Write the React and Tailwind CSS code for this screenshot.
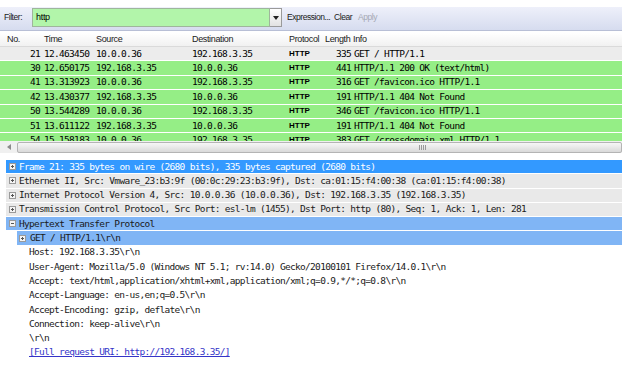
const packets = [
  { no: 21, time: '12.463450', src: '10.0.0.36', dst: '192.168.3.35', len: 335, info: 'GET / HTTP/1.1', sel: true },
  { no: 30, time: '12.650175', src: '192.168.3.35', dst: '10.0.0.36', len: 441, info: 'HTTP/1.1 200 OK  (text/html)' },
  { no: 41, time: '13.313923', src: '10.0.0.36', dst: '192.168.3.35', len: 316, info: 'GET /favicon.ico HTTP/1.1' },
  { no: 42, time: '13.430377', src: '192.168.3.35', dst: '10.0.0.36', len: 191, info: 'HTTP/1.1 404 Not Found' },
  { no: 50, time: '13.544289', src: '10.0.0.36', dst: '192.168.3.35', len: 346, info: 'GET /favicon.ico HTTP/1.1' },
  { no: 51, time: '13.611122', src: '192.168.3.35', dst: '10.0.0.36', len: 191, info: 'HTTP/1.1 404 Not Found' },
  { no: 54, time: '15.158183', src: '10.0.0.36', dst: '192.168.3.35', len: 383, info: 'GET /crossdomain.xml HTTP/1.1' },
];

const mono = "font-['DejaVu_Sans_Mono','Liberation_Mono',monospace] text-[9.5px] tracking-[-0.7px]";
const sans = "font-['Liberation_Sans',sans-serif] text-[9px] tracking-[-0.35px]";

function Expander({ open }) {
  return (
    <svg width="7" height="7" viewBox="0 0 7 7" className="shrink-0">
      <rect x="0.5" y="0.5" width="6" height="6" fill="#f4f4f4" stroke="#9a9a9a" />
      <path d="M2 3.5h3" stroke="#555" />
      {!open && <path d="M3.5 2v3" stroke="#555" />}
    </svg>
  );
}

export default function App() {
  return (
    <div className="w-[630px] h-[370px] bg-white overflow-hidden pt-[7px] text-black">
      <div className="w-[622px]">
        {/* filter toolbar */}
        <div className="font-['Liberation_Sans',sans-serif] text-[8.5px] tracking-[-0.45px] h-[24px] flex items-start pt-px bg-gradient-to-b from-[#eef0fa] to-[#d6dcef] border-b border-[#b8bfd6] whitespace-nowrap">
          <span className="ml-[4px] w-[28px] leading-[19px] text-[#1a1a1a]">Filter:</span>
          <div className="w-[238px] h-[19px] bg-[#b2f5aa] border border-[#9fb59c] pl-[3px] leading-[17px] text-[9px] tracking-[-0.3px]">http</div>
          <div className="w-[12px] h-[19px] border border-l-0 border-[#9a9a9a] bg-gradient-to-b from-white to-[#e2e2e2] flex items-center justify-center">
            <svg width="6" height="4" viewBox="0 0 6 4"><path d="M0 0h6L3 4z" fill="#222" /></svg>
          </div>
          <span className="ml-[5px] w-[47px] leading-[19px] text-[#1a1a1a]">Expression...</span>
          <span className="w-[24px] leading-[19px] text-[#1a1a1a]">Clear</span>
          <span className="leading-[19px] text-[#a5a8b4]">Apply</span>
        </div>

        {/* column headers */}
        <div className={`${sans} mt-[2px] h-[14px] flex items-center bg-gradient-to-b from-white to-[#f1f1f1] border-b border-[#dadada] text-[#1a1a1a]`}>
          <span className="w-[44px] pl-[7px]">No.</span>
          <span className="w-[52px]">Time</span>
          <span className="w-[96px]">Source</span>
          <span className="w-[97px]">Destination</span>
          <span className="w-[36px]">Protocol</span>
          <span className="w-[28px]">Length</span>
          <span>Info</span>
        </div>

        {/* packet list */}
        <div className={`${mono} h-[94px] overflow-hidden`}>
          {packets.map((p) => (
            <div
              key={p.no}
              className={`h-[14.4px] flex items-center whitespace-nowrap border-b border-white ${p.sel ? 'bg-[#ececec]' : 'bg-[#95ee86]'}`}
            >
              <span className="w-[41px] text-right pr-px">{p.no}</span>
              <span className="w-[55px] pl-[3px]">{p.time}</span>
              <span className="w-[96px]">{p.src}</span>
              <span className="w-[97px]">{p.dst}</span>
              <span className="w-[36px] font-['Liberation_Sans',sans-serif] text-[8px] font-bold tracking-normal">HTTP</span>
              <span className="w-[26px] text-right">{p.len}</span>
              <span className="pl-[3px]">{p.info}</span>
            </div>
          ))}
        </div>

        {/* horizontal scrollbar */}
        <div className="h-[12px] flex items-center bg-[#f0f0f0]">
          <div className="w-[17px] flex justify-center">
            <svg width="4" height="6" viewBox="0 0 4 6"><path d="M4 0v6L0 3z" fill="#8a8a8a" /></svg>
          </div>
          <div className="flex-1 h-[11px] rounded-[2px] border border-[#b4b4b4] bg-gradient-to-b from-[#f7f7f7] to-[#d9d9d9] flex items-center pl-[401px]">
            <div className="flex gap-px">
              <div className="w-px h-[5px] bg-[#9a9a9a]" />
              <div className="w-px h-[5px] bg-[#9a9a9a]" />
              <div className="w-px h-[5px] bg-[#9a9a9a]" />
              <div className="w-px h-[5px] bg-[#9a9a9a]" />
            </div>
          </div>
        </div>

        <div className="h-[7px] bg-white" />

        {/* packet details */}
        <div className={`${mono} flex flex-col gap-px whitespace-nowrap text-[#1a1a1a]`}>
          <div className="ml-[6px] h-[13.3px] flex items-center gap-[3px] pl-[3px] bg-[#3399ff] text-white">
            <Expander />
            <span>Frame 21: 335 bytes on wire (2680 bits), 335 bytes captured (2680 bits)</span>
          </div>
          <div className="ml-[6px] h-[13.3px] flex items-center gap-[3px] pl-[3px] bg-[#e9e9e9]">
            <Expander />
            <span>Ethernet II, Src: Vmware_23:b3:9f (00:0c:29:23:b3:9f), Dst: ca:01:15:f4:00:38 (ca:01:15:f4:00:38)</span>
          </div>
          <div className="ml-[6px] h-[13.3px] flex items-center gap-[3px] pl-[3px] bg-[#e9e9e9]">
            <Expander />
            <span>Internet Protocol Version 4, Src: 10.0.0.36 (10.0.0.36), Dst: 192.168.3.35 (192.168.3.35)</span>
          </div>
          <div className="ml-[6px] h-[13.3px] flex items-center gap-[3px] pl-[3px] bg-[#e9e9e9]">
            <Expander />
            <span>Transmission Control Protocol, Src Port: esl-lm (1455), Dst Port: http (80), Seq: 1, Ack: 1, Len: 281</span>
          </div>
          <div className="ml-[6px] h-[13.3px] flex items-center gap-[3px] pl-[3px] bg-[#80b5f5]">
            <Expander open />
            <span>Hypertext Transfer Protocol</span>
          </div>
          <div className="ml-[17px] h-[13.3px] flex items-center gap-[4px] pl-[2px] bg-[#80b5f5]">
            <Expander />
            <span>GET / HTTP/1.1\r\n</span>
          </div>
          {[
            'Host: 192.168.3.35\\r\\n',
            'User-Agent: Mozilla/5.0 (Windows NT 5.1; rv:14.0) Gecko/20100101 Firefox/14.0.1\\r\\n',
            'Accept: text/html,application/xhtml+xml,application/xml;q=0.9,*/*;q=0.8\\r\\n',
            'Accept-Language: en-us,en;q=0.5\\r\\n',
            'Accept-Encoding: gzip, deflate\\r\\n',
            'Connection: keep-alive\\r\\n',
            '\\r\\n',
          ].map((line) => (
            <div key={line} className="ml-[17px] h-[13.3px] flex items-center pl-[12px]">
              {line}
            </div>
          ))}
          <div className="ml-[17px] h-[13.3px] flex items-center pl-[12px]">
            <span className="text-[#3434c8] underline">[Full request URI: http://192.168.3.35/]</span>
          </div>
        </div>
      </div>
    </div>
  );
}
